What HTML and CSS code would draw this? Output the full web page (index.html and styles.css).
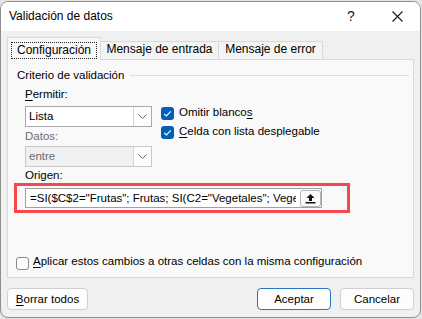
FILE: index.html
```html
<!DOCTYPE html>
<html lang="es">
<head>
  <meta charset="UTF-8" />
  <title>Validación de datos</title>
  <link rel="stylesheet" href="styles.css">
</head>
<body>
  <div class="window">
    <div class="titlebar">
      <span class="title">Validación de datos</span>
      <span class="cap-btn help">?</span>
      <span class="cap-btn close">
        <svg width="11" height="11" viewBox="0 0 11 11"><path d="M0.5 0.5 L10.5 10.5 M10.5 0.5 L0.5 10.5" stroke="#1a1a1a" stroke-width="1.1" fill="none"/></svg>
      </span>
    </div>

    <div class="client">
      <div class="tabs">
        <div class="tab active"><span class="focus">Configuración</span></div>
        <div class="tab tab-entrada">Mensaje de entrada</div>
        <div class="tab tab-error">Mensaje de error</div>
      </div>

      <div class="panel">
        <div class="group-head"><span>Criterio de validación</span><span class="rule"></span></div>

        <div class="crit">
          <div class="crit-left">
            <div class="label"><u>P</u>ermitir:</div>
            <div class="combo">
              <span class="combo-text">Lista</span>
              <span class="combo-btn"><svg width="9" height="5" viewBox="0 0 9 5"><path d="M0.5 0.5 L4.5 4.5 L8.5 0.5" stroke="#606060" stroke-width="1" fill="none"/></svg></span>
            </div>
            <div class="label disabled">Datos:</div>
            <div class="combo disabled">
              <span class="combo-text">entre</span>
              <span class="combo-btn"><svg width="9" height="5" viewBox="0 0 9 5"><path d="M0.5 0.5 L4.5 4.5 L8.5 0.5" stroke="#606060" stroke-width="1" fill="none"/></svg></span>
            </div>
          </div>
          <div class="crit-right">
            <div class="check-row">
              <span class="check on"><svg width="13" height="13" viewBox="0 0 13 13"><path d="M3.2 6.8 L5.4 9 L9.8 4.4" stroke="#fff" stroke-width="1.1" fill="none"/></svg></span>
              <span>Omitir blanco<u>s</u></span>
            </div>
            <div class="check-row">
              <span class="check on"><svg width="13" height="13" viewBox="0 0 13 13"><path d="M3.2 6.8 L5.4 9 L9.8 4.4" stroke="#fff" stroke-width="1.1" fill="none"/></svg></span>
              <span><u>C</u>elda con lista desplegable</span>
            </div>
          </div>
        </div>

        <div class="origen">
          <div class="label">Origen:</div>
          <div class="highlight">
            <div class="ref-input">
              <span class="ref-text">=SI($C$2="Frutas"; Frutas; SI(C2="Vegetales"; Vegeta</span>
              <span class="ref-btn"><svg width="11" height="11" viewBox="0 0 11 11"><path d="M5.5 1 L9.5 5 L7 5 L7 8 L4 8 L4 5 L1.5 5 Z" fill="#111"/><rect x="0.5" y="9" width="10" height="1.5" fill="#111"/></svg></span>
            </div>
          </div>
        </div>

        <div class="check-row apply">
          <span class="check"></span>
          <span><u>A</u>plicar estos cambios a otras celdas con la misma configuración</span>
        </div>
      </div>

      <div class="buttons">
        <div class="btn btn-clear"><u>B</u>orrar todos</div>
        <div class="spacer"></div>
        <div class="btn default">Aceptar</div>
        <div class="btn">Cancelar</div>
      </div>
    </div>
  </div>
</body>
</html>
```

FILE: styles.css
```css
* { box-sizing: border-box; margin: 0; padding: 0; }
body { background: #e4e4e4; font-family: 'Liberation Sans', Arial, sans-serif; font-size: 11.5px; line-height: 15px; color: #000; }
u { text-decoration: underline; text-underline-offset: 2px; }

.window { margin-top: 1px; width: 421px; height: 317px; border: 1px solid #8f8f8f; border-radius: 8px; background: #f0f0f0; overflow: hidden; display: flex; flex-direction: column; }

.titlebar { height: 29px; background: #fff; display: flex; align-items: center; padding-left: 8px; font-size: 12px; }
.title { flex: 1; }
.cap-btn { width: 46px; height: 29px; display: flex; align-items: center; justify-content: center; }
.help { font-size: 14px; color: #1a1a1a; }
.close svg { display: block; }

.client { flex: 1; display: flex; flex-direction: column; padding: 6px 0 0 6px; }

.tabs { display: flex; align-items: flex-end; height: 22px; font-size: 12px; }
.tab { height: 18px; border: 1px solid #d9d9d9; border-bottom: none; background: #f4f4f4; text-align: center; white-space: nowrap; }
.tab.active { height: 23px; width: 94px; margin-bottom: -1px; padding: 4px 2px 0 3px; background: #f9f9f9; position: relative; z-index: 1; text-align: left; }
.focus { display: inline-block; border: 1px dotted #222; padding: 0 5px; }
.tab-entrada { width: 119px; margin-left: -1px; }
.tab-error { width: 105px; margin-left: -1px; }

.panel { width: 407px; height: 219px; border: 1px solid #d9d9d9; background: #f9f9f9; display: flex; flex-direction: column; padding: 8px 0 7px 0; }

.group-head { display: flex; align-items: center; padding-left: 9px; }
.rule { flex: 1; height: 1px; background: #dcdcdc; margin: 0 4px 0 6px; }

.crit { display: grid; grid-template-columns: 127px 1fr; column-gap: 9px; margin-top: 4px; padding-left: 17px; }
.crit-left { display: flex; flex-direction: column; }
.label.disabled { margin-top: 2px; color: #6d6d6d; }

.combo { height: 21px; margin-top: 4px; border: 1px solid #a8a8a8; background: #fff; display: flex; align-items: center; }
.combo.disabled { margin-top: 2px; border-color: #c8c8c8; background: #f0f0f0; color: #6d6d6d; }
.combo-text { flex: 1; padding-left: 3px; }
.combo-btn { width: 18px; height: 100%; border-left: 1px solid #d4d4d4; background: #fdfdfd; display: flex; align-items: center; justify-content: center; }
.combo-btn svg { display: block; }

.crit-right { display: flex; flex-direction: column; gap: 4px; padding-top: 18px; }
.check-row { display: flex; align-items: flex-start; gap: 5px; white-space: nowrap; }
.check { width: 13px; height: 13px; margin-top: 2px; border: 1px solid #8a8a8a; border-radius: 3px; background: #fdfdfd; flex: none; }
.check.on { border: none; background: #005fb8; }
.check svg { display: block; }

.origen { margin-top: 1px; padding-left: 17px; }
.highlight { width: 336px; margin-left: -11px; border: 3px solid #f5474c; padding: 2px 0 2px 8px; }
.ref-input { width: 297px; height: 20px; border: 1px solid #a0a0a0; background: #fff; display: flex; align-items: center; padding-left: 4px; }
.ref-text { flex: 1; overflow: hidden; white-space: nowrap; }
.ref-btn { width: 21px; height: 17px; margin-left: 4px; border: 1px solid #b4b4b4; border-radius: 3px; background: #fbfbfb; display: flex; align-items: center; justify-content: center; flex: none; }
.ref-btn svg { display: block; }

.check-row.apply { margin-top: auto; padding-left: 8px; gap: 4px; }
.apply .check { margin-top: 3px; }

.buttons { display: flex; margin-top: 10px; width: 407px; gap: 9px; }
.spacer { flex: 1; }
.btn { height: 22px; width: 74px; border: 1px solid #d0d0d0; border-radius: 4px; background: #fdfdfd; display: flex; align-items: center; justify-content: center; }
.btn-clear { width: 81px; }
.btn.default { border-color: #2a74c4; }
```
